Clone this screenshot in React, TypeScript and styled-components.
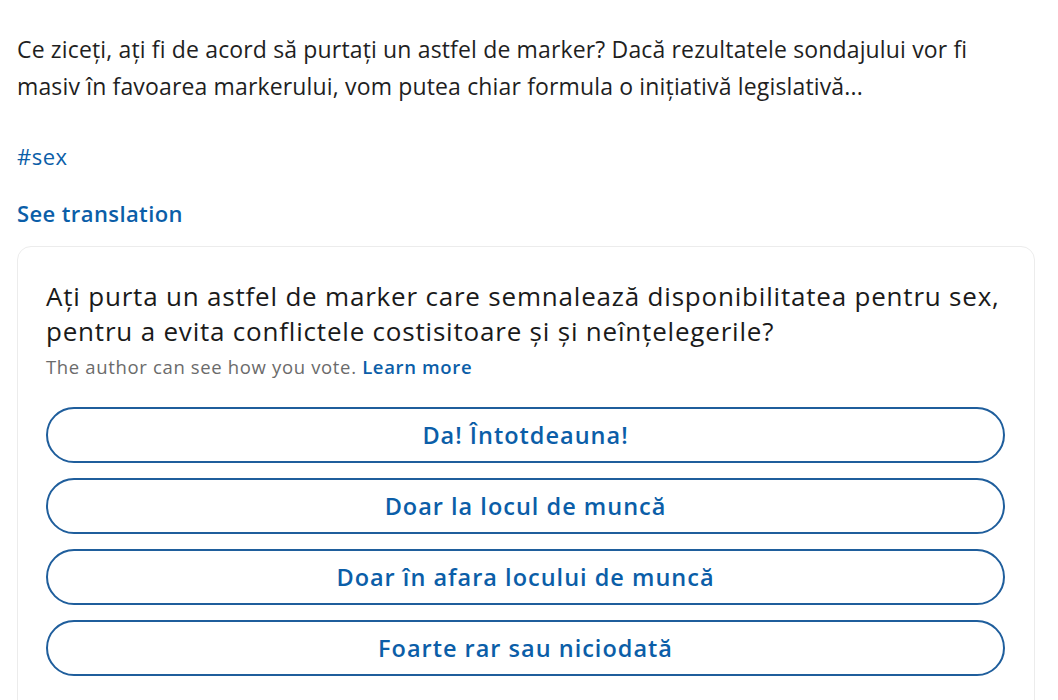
import React from 'react'
import styled, { createGlobalStyle } from 'styled-components'

const GlobalStyle = createGlobalStyle`
  html, body {
    margin: 0;
    padding: 0;
    background: #ffffff;
  }
  body {
    font-family: 'Open Sans', 'Noto Sans', sans-serif;
    color: #1d1d1d;
  }
`

const Post = styled.div`
  width: 1058px;
  height: 700px;
  overflow: hidden;
  box-sizing: border-box;
  padding: 31px 23px 0 17px;
`

const Body = styled.p`
  margin: 0;
  font-size: 23px;
  letter-spacing: 0.15px;
  line-height: 37px;
  color: #1f1f1f;
`

const Hashtag = styled.a`
  display: block;
  margin-top: 33px;
  font-size: 22px;
  letter-spacing: 0.5px;
  line-height: 37px;
  color: #0b5ea8;
  text-decoration: none;
`

const TranslateLink = styled.a`
  display: block;
  margin-top: 20px;
  font-size: 22px;
  letter-spacing: 0.4px;
  line-height: 37px;
  font-weight: 600;
  color: #0b5ea8;
  text-decoration: none;
`

const PollCard = styled.div`
  margin-top: 14px;
  border: 1px solid #ececec;
  border-radius: 14px;
  padding: 32px 29px 0 28px;
  height: 470px;
  box-sizing: border-box;
`

const Question = styled.h2`
  margin: 0 -10px 0 0;
  font-size: 26px;
  letter-spacing: 0.8px;
  line-height: 35px;
  font-weight: 500;
  color: #1a1a1a;
`

const Note = styled.p`
  margin: 3px 0 0;
  font-size: 18.5px;
  letter-spacing: 0.65px;
  line-height: 30px;
  color: #6b6b6b;
`

const NoteLink = styled.a`
  color: #0b5ea8;
  font-weight: 600;
  text-decoration: none;
`

const Options = styled.div`
  display: flex;
  flex-direction: column;
  gap: 15px;
  margin-top: 25px;
`

const OptionButton = styled.button`
  height: 56px;
  border: 2px solid #1f5e9c;
  border-radius: 28px;
  background: #ffffff;
  color: #0b5ea8;
  font-family: inherit;
  font-size: 23.5px;
  letter-spacing: 1px;
  font-weight: 600;
  cursor: pointer;
`

const options = [
  'Da! Întotdeauna!',
  'Doar la locul de muncă',
  'Doar în afara locului de muncă',
  'Foarte rar sau niciodată'
]

export default function App() {
  return (
    <>
      <GlobalStyle />
      <Post>
        <Body>
          Ce ziceți, ați fi de acord să purtați un astfel de marker? Dacă rezultatele sondajului vor fi masiv în
          favoarea markerului, vom putea chiar formula o inițiativă legislativă...
        </Body>
        <Hashtag href="#">#sex</Hashtag>
        <TranslateLink href="#">See translation</TranslateLink>
        <PollCard>
          <Question>
            Ați purta un astfel de marker care semnalează disponibilitatea pentru sex, pentru a evita conflictele
            costisitoare și și neînțelegerile?
          </Question>
          <Note>
            The author can see how you vote. <NoteLink href="#">Learn more</NoteLink>
          </Note>
          <Options>
            {options.map(o => (
              <OptionButton key={o}>{o}</OptionButton>
            ))}
          </Options>
        </PollCard>
      </Post>
    </>
  )
}
